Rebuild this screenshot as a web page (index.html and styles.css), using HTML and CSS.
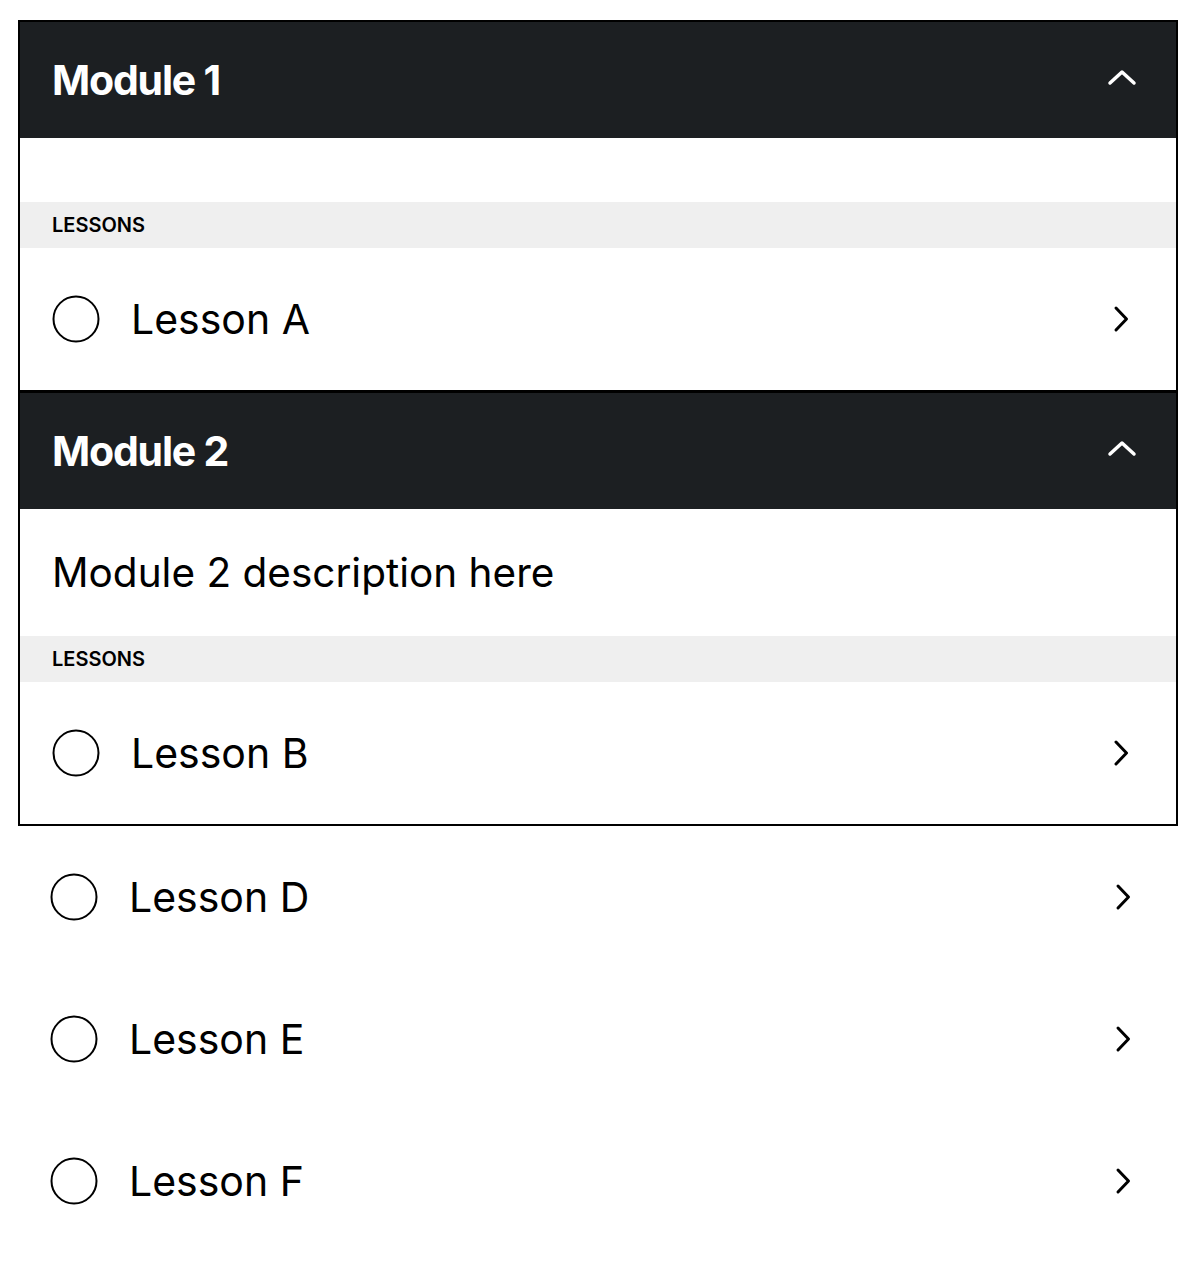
FILE: index.html
```html
<!DOCTYPE html>
<html lang="en">
<head>
  <meta charset="UTF-8" />
  <title>Course Modules</title>
  <link rel="stylesheet" href="styles.css">
</head>
<body>
  <div class="course">
    <section class="module">
      <div class="module-header">
        <h2>Module 1</h2>
        <svg class="toggle" viewBox="0 0 32 32" width="32" height="32"><polyline points="4,19 16,8 28,19" /></svg>
      </div>
      <div class="module-desc"></div>
      <div class="lessons-label">LESSONS</div>
      <ul class="lessons">
        <li class="lesson">
          <svg class="check" viewBox="0 0 48 48" width="48" height="48"><circle cx="24" cy="24" r="22.5" /></svg>
          <span class="lesson-title">Lesson A</span>
          <svg class="arrow" viewBox="0 0 32 32" width="32" height="32"><polyline points="10,5 20.5,16 10,27" /></svg>
        </li>
      </ul>
    </section>
    <section class="module">
      <div class="module-header">
        <h2>Module 2</h2>
        <svg class="toggle" viewBox="0 0 32 32" width="32" height="32"><polyline points="4,19 16,8 28,19" /></svg>
      </div>
      <div class="module-desc">Module 2 description here</div>
      <div class="lessons-label">LESSONS</div>
      <ul class="lessons">
        <li class="lesson">
          <svg class="check" viewBox="0 0 48 48" width="48" height="48"><circle cx="24" cy="24" r="22.5" /></svg>
          <span class="lesson-title">Lesson B</span>
          <svg class="arrow" viewBox="0 0 32 32" width="32" height="32"><polyline points="10,5 20.5,16 10,27" /></svg>
        </li>
      </ul>
    </section>
  </div>
  <ul class="lessons spill">
    <li class="lesson">
      <svg class="check" viewBox="0 0 48 48" width="48" height="48"><circle cx="24" cy="24" r="22.5" /></svg>
      <span class="lesson-title">Lesson D</span>
      <svg class="arrow" viewBox="0 0 32 32" width="32" height="32"><polyline points="10,5 20.5,16 10,27" /></svg>
    </li>
    <li class="lesson">
      <svg class="check" viewBox="0 0 48 48" width="48" height="48"><circle cx="24" cy="24" r="22.5" /></svg>
      <span class="lesson-title">Lesson E</span>
      <svg class="arrow" viewBox="0 0 32 32" width="32" height="32"><polyline points="10,5 20.5,16 10,27" /></svg>
    </li>
    <li class="lesson">
      <svg class="check" viewBox="0 0 48 48" width="48" height="48"><circle cx="24" cy="24" r="22.5" /></svg>
      <span class="lesson-title">Lesson F</span>
      <svg class="arrow" viewBox="0 0 32 32" width="32" height="32"><polyline points="10,5 20.5,16 10,27" /></svg>
    </li>
  </ul>
</body>
</html>
```

FILE: styles.css
```css
body {
  margin: 0;
  padding: 20px 0 0 18px;
  font-family: Inter, "Noto Sans", sans-serif;
  background-color: #fff;
  color: #000;
}
.course {
  width: 1156px;
  border: 2px solid #000;
}
.module + .module {
  border-top: 3px solid #000;
}
.module-header {
  height: 116px;
  display: flex;
  align-items: center;
  justify-content: space-between;
  padding: 0 38px 0 32px;
  background-color: #1c1f22;
  color: #fff;
}
.module-header h2 {
  margin: 0;
  font-size: 41px;
  font-weight: 700;
  letter-spacing: -1.2px;
}
.toggle polyline {
  fill: none;
  stroke: #fff;
  stroke-width: 3.5;
  stroke-linecap: round;
  stroke-linejoin: round;
}
.module-desc {
  min-height: 64px;
  padding: 0 32px;
  display: flex;
  align-items: center;
  font-size: 40.5px;
}
.module-desc:not(:empty) {
  height: 127px;
}
.lessons-label {
  height: 46px;
  display: flex;
  align-items: center;
  padding: 0 32px;
  background-color: #efefef;
  font-size: 20px;
  font-weight: 600;
  letter-spacing: 0;
}
.lessons {
  list-style: none;
  margin: 0;
  padding: 0;
}
.spill {
  width: 1160px;
}
.lesson {
  height: 142px;
  display: flex;
  align-items: center;
  padding: 0 38px 0 32px;
}
.check circle {
  fill: none;
  stroke: #000;
  stroke-width: 2;
}
.lesson-title {
  flex: 1;
  margin-left: 31px;
  font-size: 41px;
}
.arrow polyline {
  fill: none;
  stroke: #000;
  stroke-width: 3;
  stroke-linecap: round;
  stroke-linejoin: round;
}
```
